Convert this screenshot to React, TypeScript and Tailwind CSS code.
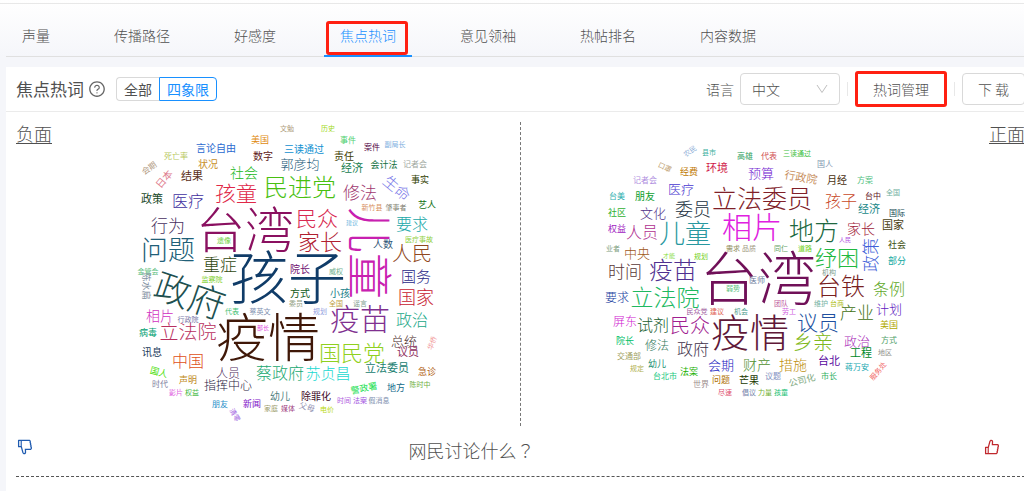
import { AiOutlineDislike, AiOutlineLike, AiOutlineQuestionCircle } from "react-icons/ai";

type Word = [text: string, x: number, y: number, size: number, color: string, rotate?: number];

const negativeWords: Word[] = [
  ["文勉", 287, 127, 7, "#b0a080"],
  ["历史", 328, 127, 7, "#a0d820"],
  ["美国", 260, 139, 9, "#e08a10"],
  ["言论自由", 216, 147, 10, "#2a6ad0"],
  ["死亡率", 176, 155, 8, "#b8c860"],
  ["会期", 149, 167, 8, "#b09880", -35],
  ["日本", 164, 178, 10, "#e08090", -50],
  ["状况", 208, 163, 10, "#c8902a"],
  ["结果", 192, 175, 11, "#5a3020"],
  ["数字", 263, 155, 10, "#602020"],
  ["三读通过", 304, 148, 10, "#1090d0"],
  ["事件", 348, 139, 8, "#50d070"],
  ["案件", 372, 146, 8, "#500040"],
  ["责任", 344, 155, 10, "#404000"],
  ["副局长", 395, 143, 7, "#80b0e0"],
  ["郭彦均", 300, 163, 13, "#205878"],
  ["经济", 352, 167, 11, "#208050"],
  ["会计法", 384, 164, 9, "#107040"],
  ["记者会", 415, 163, 8, "#a0a8a0"],
  ["社会", 244, 172, 14, "#20b820"],
  ["孩童", 236, 192, 21, "#e02848"],
  ["民进党", 300, 186, 24, "#48c010"],
  ["修法", 360, 192, 17, "#a03870"],
  ["生命", 397, 187, 15, "#7878e8", 40],
  ["事实", 420, 179, 9, "#304000"],
  ["政策", 152, 198, 11, "#184828"],
  ["医疗", 188, 200, 16, "#4030a0"],
  ["新竹县", 372, 206, 7, "#d89060"],
  ["肇事者", 396, 206, 7, "#808070"],
  ["艺人", 427, 204, 9, "#107010"],
  ["行为", 168, 225, 17, "#483060"],
  ["问题", 168, 249, 27, "#206078"],
  ["台湾", 245, 228, 49, "#8a1060"],
  ["遗像", 224, 239, 7, "#70d040"],
  ["民众", 317, 217, 21, "#d82850"],
  ["儿童", 370, 252, 46, "#c820b0", 90],
  ["建议", 352, 222, 6, "#70b8e0"],
  ["要求", 412, 223, 16, "#20a8a8"],
  ["家长", 320, 241, 22, "#b02030"],
  ["人数", 383, 243, 10, "#305878"],
  ["医疗事故", 419, 238, 7, "#90d040"],
  ["人民", 412, 252, 20, "#904820"],
  ["重症", 220, 264, 17, "#304810"],
  ["孩子", 288, 276, 58, "#103c68"],
  ["院长", 300, 268, 10, "#701070"],
  ["威权", 336, 270, 7, "#70b090"],
  ["国务", 416, 275, 15, "#282888"],
  ["政府", 190, 294, 36, "#205050", 19],
  ["金管会", 148, 270, 7, "#60c080"],
  ["陈水扁", 146, 285, 9, "#8090a0", 90],
  ["监察院", 212, 278, 7, "#80d030"],
  ["代表", 232, 310, 7, "#40c070"],
  ["蔡英文", 260, 310, 7, "#8090b0"],
  ["相片", 160, 315, 14, "#d030c0"],
  ["行政院", 188, 318, 7, "#7878a8"],
  ["立法院", 188, 331, 19, "#b83060"],
  ["疫情", 268, 336, 52, "#401808"],
  ["病毒", 148, 332, 9, "#00a070"],
  ["部长", 263, 327, 6, "#e050e0"],
  ["方式", 300, 292, 10, "#105818"],
  ["小孩", 340, 292, 10, "#208088"],
  ["委员", 296, 302, 7, "#90a080"],
  ["全国", 336, 302, 7, "#c0a040"],
  ["谣言", 360, 302, 7, "#80a090"],
  ["规划", 320, 310, 7, "#90a0e0"],
  ["国家", 416, 296, 18, "#c82030"],
  ["疫苗", 360, 318, 30, "#803090"],
  ["政治", 412, 319, 16, "#18a888"],
  ["总统", 404, 340, 13, "#482828"],
  ["议员", 408, 351, 11, "#903060"],
  ["华侨", 432, 342, 7, "#f09090", -70],
  ["国民党", 352, 352, 22, "#90d020"],
  ["讯息", 152, 351, 10, "#203858"],
  ["中国", 188, 360, 16, "#e05020"],
  ["人员", 228, 372, 12, "#503060"],
  ["国人", 159, 371, 9, "#50e010", 15],
  ["声明", 188, 379, 9, "#c08a20"],
  ["时代", 160, 383, 8, "#8080a0"],
  ["指挥中心", 228, 384, 12, "#281840"],
  ["蔡政府", 280, 372, 16, "#20a870"],
  ["苏贞昌", 328, 372, 15, "#20d8d0"],
  ["立法委员", 387, 367, 11, "#208070"],
  ["急诊", 427, 371, 9, "#b06010"],
  ["陈时中", 420, 383, 7, "#70b040"],
  ["地方", 396, 387, 9, "#106888"],
  ["警政署", 364, 387, 9, "#20e050", -12],
  ["影片", 176, 391, 7, "#e060e0"],
  ["权益", 192, 391, 7, "#40b840"],
  ["幼儿", 280, 395, 10, "#508080"],
  ["除罪化", 316, 395, 10, "#400828"],
  ["时间", 344, 399, 7, "#b060e0"],
  ["法案", 360, 399, 7, "#a050e0"],
  ["假消息", 379, 399, 7, "#8090b0"],
  ["朋友", 220, 403, 8, "#2890c8"],
  ["新闻", 252, 403, 9, "#8010c8"],
  ["清零", 235, 414, 7, "#a060e0", 60],
  ["家庭", 271, 407, 7, "#a0a070"],
  ["媒体", 288, 407, 7, "#a04080"],
  ["父母", 307, 406, 8, "#9090b0", 15],
  ["电价", 327, 408, 7, "#b8d810"],
];

const positiveWords: Word[] = [
  ["农民", 690, 150, 7, "#90b0d8", -35],
  ["县市", 709, 151, 7, "#40b0a0"],
  ["高雄", 745, 155, 8, "#30a060"],
  ["口罩", 665, 166, 7, "#c0a070", 25],
  ["经费", 689, 171, 9, "#c07800"],
  ["环境", 717, 167, 11, "#d01848"],
  ["记者会", 645, 179, 8, "#b090e0"],
  ["预算", 761, 172, 13, "#7020d0"],
  ["医疗", 681, 188, 13, "#4838d0"],
  ["台美", 617, 195, 8, "#30b0b0"],
  ["朋友", 645, 195, 10, "#10a030"],
  ["委员", 693, 208, 18, "#203040"],
  ["立法委员", 762, 197, 25, "#802028"],
  ["社区", 617, 212, 9, "#30b030"],
  ["文化", 653, 212, 13, "#503088"],
  ["权益", 617, 228, 9, "#a020c0"],
  ["人员", 642, 231, 16, "#b03090"],
  ["儿童", 685, 232, 26, "#2898a0"],
  ["相片", 752, 226, 30, "#e020e0"],
  ["业者", 613, 247, 7, "#80a080"],
  ["中央", 637, 252, 13, "#a05818"],
  ["才能", 669, 255, 6, "#90e050"],
  ["规划", 701, 255, 7, "#70d020"],
  ["需求", 733, 247, 7, "#909060"],
  ["品质", 749, 247, 7, "#a09880"],
  ["时间", 625, 271, 17, "#583838"],
  ["疫苗", 673, 269, 24, "#503090"],
  ["台湾", 758, 277, 58, "#701058"],
  ["代表", 769, 155, 8, "#d05050"],
  ["三读通过", 797, 152, 7, "#40c040"],
  ["国人", 825, 163, 8, "#8098b0"],
  ["行政院", 801, 176, 11, "#c89060", 10],
  ["月经", 837, 179, 10, "#483010"],
  ["方案", 865, 179, 8, "#50c080"],
  ["孩子", 841, 200, 16, "#c84828"],
  ["台中", 873, 195, 8, "#601020"],
  ["全国", 893, 191, 7, "#70b0a0"],
  ["经济", 869, 208, 11, "#188888"],
  ["国际", 897, 212, 8, "#104850"],
  ["地方", 814, 229, 25, "#206840"],
  ["家长", 861, 228, 14, "#a02038"],
  ["国家", 893, 224, 11, "#484010"],
  ["人民", 845, 239, 6, "#b050e0"],
  ["同仁", 781, 247, 7, "#60a060"],
  ["道路", 805, 247, 7, "#70d020"],
  ["纾困", 837, 257, 22, "#20b840"],
  ["政策", 871, 254, 17, "#4060d8", -90],
  ["社会", 897, 244, 9, "#405010"],
  ["部分", 897, 260, 9, "#10a8a0"],
  ["机构", 829, 271, 7, "#80a090"],
  ["弱势", 733, 287, 7, "#60c080"],
  ["医师", 757, 279, 8, "#7080a0"],
  ["要求", 617, 296, 12, "#2040a0"],
  ["立法院", 665, 296, 23, "#20b860"],
  ["民众党", 697, 310, 7, "#a060a0"],
  ["建议", 717, 310, 7, "#e06050"],
  ["机会", 741, 310, 7, "#50a090"],
  ["屏东", 625, 320, 12, "#d020d0"],
  ["试剂", 653, 324, 16, "#206030"],
  ["民众", 690, 324, 20, "#a02090"],
  ["疫情", 750, 331, 39, "#601838"],
  ["院长", 625, 340, 9, "#00c068"],
  ["修法", 657, 344, 12, "#307858"],
  ["政府", 693, 348, 16, "#403048"],
  ["交通部", 629, 355, 8, "#a0a060"],
  ["规定", 637, 367, 7, "#b0b050"],
  ["幼儿", 657, 363, 9, "#209070"],
  ["会期", 721, 364, 13, "#2020c0"],
  ["财产", 757, 364, 14, "#509030"],
  ["台北市", 665, 375, 8, "#20c880"],
  ["法案", 689, 371, 9, "#20b000"],
  ["世界", 701, 383, 8, "#a09090"],
  ["问题", 721, 379, 9, "#b07000"],
  ["芒果", 749, 379, 10, "#203800"],
  ["尽速", 725, 391, 7, "#e05070"],
  ["倡议", 749, 391, 7, "#7080a8"],
  ["力量", 765, 391, 7, "#70b030"],
  ["孩童", 781, 391, 7, "#10c070"],
  ["台铁", 841, 285, 24, "#782020"],
  ["条例", 889, 288, 16, "#60a828"],
  ["团队", 781, 302, 7, "#c060a0"],
  ["劳工", 789, 310, 7, "#d060e0"],
  ["维护", 821, 302, 7, "#70b0a0"],
  ["台商", 837, 302, 7, "#b0c020"],
  ["议员", 818, 321, 21, "#2050a0"],
  ["产业", 857, 312, 17, "#407010"],
  ["计划", 889, 308, 13, "#6018c0"],
  ["美国", 889, 324, 9, "#b0a800"],
  ["乡亲", 813, 341, 20, "#80b820"],
  ["政治", 857, 340, 13, "#a828b8"],
  ["方式", 889, 339, 8, "#50a068"],
  ["工程", 861, 352, 11, "#008828"],
  ["地区", 885, 351, 7, "#909088"],
  ["措施", 793, 364, 14, "#c09010"],
  ["台北", 829, 360, 11, "#5808a0"],
  ["蒋万安", 857, 366, 8, "#20a8b0"],
  ["服务处", 878, 370, 7, "#f06060", -50],
  ["议题", 773, 375, 8, "#8090c0"],
  ["公司化", 802, 379, 9, "#80a880", -15],
  ["市长", 829, 375, 8, "#30b060"],
];

function WordCloud({ words, viewBox, label }: { words: Word[]; viewBox: string; label: string }) {
  return (
    <svg role="img" aria-label={label} viewBox={viewBox} className="h-[308px] w-[308px] shrink-0">
      {words.map(([text, x, y, size, color, rotate = 0]) => (
        <text
          key={`${text}-${x}-${y}`}
          className={size < 12 ? "font-normal" : "font-light"}
          textAnchor="middle"
          fontSize={size}
          fill={color}
          transform={`translate(${x} ${y}) rotate(${rotate})`}
          dy="0.38em"
        >
          {text}
        </text>
      ))}
    </svg>
  );
}

const tabs = ["声量", "传播路径", "好感度", "焦点热词", "意见领袖", "热帖排名", "内容数据"];

function Separator() {
  return <span className="mx-[7px] h-3.5 w-px bg-[#e8e8e8]" />;
}

export default function App() {
  return (
    <div className="min-h-screen overflow-hidden bg-[#f5f6fa] font-['Noto_Sans_CJK_SC',sans-serif] text-sm text-[#505050]">
      <header className="bg-linear-to-b from-white to-[#f5f6fa] pt-[3px]">
        <nav className="flex h-[54px] gap-8 border-t border-t-[#e8e8e8] pl-1.5">
          <div className="flex flex-1 gap-8 border-b border-[#e0e0e0]">
            {tabs.map((tab) => {
              const active = tab === "焦点热词";
              return (
                <a
                  key={tab}
                  href="#"
                  className={
                    active
                      ? "relative -mb-px flex items-center border-b-2 border-[#1890ff] px-4 pt-2.5 font-light text-[#1890ff]"
                      : "flex items-center px-4 pt-2.5 font-light"
                  }
                >
                  {tab}
                  {active && (
                    <span className="absolute top-[17px] right-1 bottom-0 left-0.5 rounded-[3px] border-3 border-[#ff2012]" />
                  )}
                </a>
              );
            })}
          </div>
        </nav>
      </header>

      <main className="mt-2.5 -mr-4 ml-1.5 bg-white">
        <div className="flex h-[45px] items-center border-b border-[#ebebeb] pr-[15px] pl-2.5">
          <h1 className="text-[17px]">焦点热词</h1>
          <AiOutlineQuestionCircle className="ml-1 size-[18px] text-[#666]" />
          <div className="ml-2.5 flex h-6 text-sm leading-[22px]">
            <button className="rounded-l border border-r-0 border-[#d9d9d9] px-[7px]">全部</button>
            <button className="rounded-r border border-[#1890ff] px-[7px] text-[#1890ff]">四象限</button>
          </div>
          <label htmlFor="language" className="mr-1.5 ml-auto font-light">
            语言
          </label>
          <div className="relative">
            <select
              id="language"
              className="h-8 w-[100px] appearance-none rounded border border-[#d9d9d9] bg-white pl-[11px] font-light"
            >
              <option>中文</option>
            </select>
            <svg
              viewBox="0 0 12 12"
              fill="none"
              stroke="#bfbfbf"
              className="pointer-events-none absolute top-2.5 right-3 size-3"
            >
              <path d="M1 2 L6 9.5 L11 2" />
            </svg>
          </div>
          <Separator />
          <button className="h-9 rounded-[3px] border-3 border-[#ff2012] px-[15px] font-light">热词管理</button>
          <Separator />
          <button className="h-8 rounded border border-[#d9d9d9] px-[15px] font-light whitespace-pre">下 载</button>
        </div>

        <div className="flex pt-2.5 pr-[15px] pl-2.5">
          <section className="flex flex-1">
            <h2 className="text-lg leading-[22px] font-light underline underline-offset-2">负面</h2>
            <div className="flex flex-1 justify-center">
              <WordCloud words={negativeWords} viewBox="132 121 308 308" label="负面热词" />
            </div>
          </section>
          <div className="mb-1 border-l border-dashed border-[#777]" />
          <section className="flex flex-1">
            <div className="flex flex-1 justify-center">
              <WordCloud words={positiveWords} viewBox="601 121 308 308" label="正面热词" />
            </div>
            <h2 className="text-lg leading-[22px] font-light underline underline-offset-2">正面</h2>
          </section>
        </div>

        <div className="mr-[15px] ml-2.5 flex h-[47px] items-start border-b border-dashed border-[#555] pt-2 pr-6">
          <AiOutlineDislike className="size-[18px] text-[#1f5bb0]" />
          <p className="flex-1 pr-[74px] text-center font-['Noto_Sans_CJK_TC',sans-serif] text-lg leading-6 font-light">
            网民讨论什么？
          </p>
          <AiOutlineLike className="size-[18px] text-[#c0282d]" />
        </div>
        <div className="h-8" />
      </main>
    </div>
  );
}
